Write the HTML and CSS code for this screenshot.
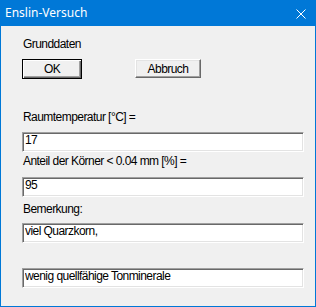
FILE: index.html
```html
<!DOCTYPE html>
<html lang="de">
<head>
    <meta charset="UTF-8">
    <title>Enslin-Versuch</title>
    <link rel="stylesheet" href="styles.css">
</head>
<body>

<div class="window">
    <div class="titlebar">
        <span class="title">Enslin-Versuch</span>
        <svg class="close" width="10" height="10" viewBox="0 0 10 10">
            <path d="M0.5 0.5 L9.5 9.5 M9.5 0.5 L0.5 9.5" stroke="#fff" stroke-width="1" fill="none"/>
        </svg>
    </div>

    <div class="content">
        <div class="label first">Grunddaten</div>
        <div class="buttons">
            <button class="btn default">OK</button>
            <button class="btn cancel">Abbruch</button>
        </div>

        <div class="label temp">Raumtemperatur [°C] =</div>
        <input class="field f-temp" type="text" value="17">

        <div class="label anteil">Anteil der Körner &lt; 0.04 mm [%] =</div>
        <input class="field f-anteil" type="text" value="95">

        <div class="label bem">Bemerkung:</div>
        <input class="field f-bem1" type="text" value="viel Quarzkorn,">
        <input class="field f-bem2" type="text" value="wenig quellfähige Tonminerale">
    </div>
</div>

</body>
</html>
```

FILE: styles.css
```css
body {
    margin: 0;
    font-family: "Liberation Sans", Arial, sans-serif;
    font-size: 12px;
    letter-spacing: -0.55px;
    color: #000;
    background-color: #f0f0f0;
}
.window {
    width: 314px;
    height: 306px;
    border: 1px solid #0078d7;
    border-top: none;
    background-color: #f0f0f0;
    display: flex;
    flex-direction: column;
}
.titlebar {
    height: 26px;
    margin: 0 -1px;
    background-color: #0078d7;
    color: white;
    display: flex;
    align-items: center;
    justify-content: space-between;
    padding: 0 10px 0 5px;
    letter-spacing: 0;
}
.title {
    font-family: "Noto Sans", sans-serif;
    font-size: 12px;
    margin-top: -1px;
}
.close {
    display: block;
    margin-top: 1px;
}
.content {
    display: flex;
    flex-direction: column;
    align-items: flex-start;
    padding-left: 21px;
}
.label {
    line-height: 15px;
    padding-left: 1px;
}
.first {
    margin-top: 11px;
}
.buttons {
    display: flex;
    align-items: flex-start;
    gap: 53px;
    margin-top: 7px;
}
.btn {
    font-family: inherit;
    font-size: 12px;
    letter-spacing: inherit;
    color: #000;
    background-color: #f0f0f0;
    padding: 0;
    border: 1px solid;
    border-color: #fff #696969 #696969 #fff;
    box-shadow: inset -1px -1px #a0a0a0, inset 1px 1px #e3e3e3;
}
.default {
    width: 60px;
    height: 20px;
    border-color: #000;
    box-shadow: inset 1px 1px #fff, inset -1px -1px #696969, inset -2px -2px #a0a0a0;
}
.cancel {
    width: 66px;
    height: 19px;
}
.temp {
    margin-top: 31px;
}
.anteil {
    margin-top: 2px;
}
.bem {
    margin-top: 5px;
}
.field {
    box-sizing: border-box;
    width: 282px;
    height: 20px;
    margin: 0;
    padding: 0 0 4px 2px;
    font-family: inherit;
    font-size: 12px;
    letter-spacing: inherit;
    color: #000;
    background-color: #fff;
    border: 1px solid;
    border-color: #a0a0a0 #fff #fff #a0a0a0;
    box-shadow: inset 1px 1px #696969, inset -1px -1px #e3e3e3;
    outline: none;
}
.f-temp {
    margin-top: 7px;
}
.f-anteil {
    margin-top: 8px;
}
.f-bem1 {
    margin-top: 6px;
}
.f-bem2 {
    margin-top: 25px;
}
```
